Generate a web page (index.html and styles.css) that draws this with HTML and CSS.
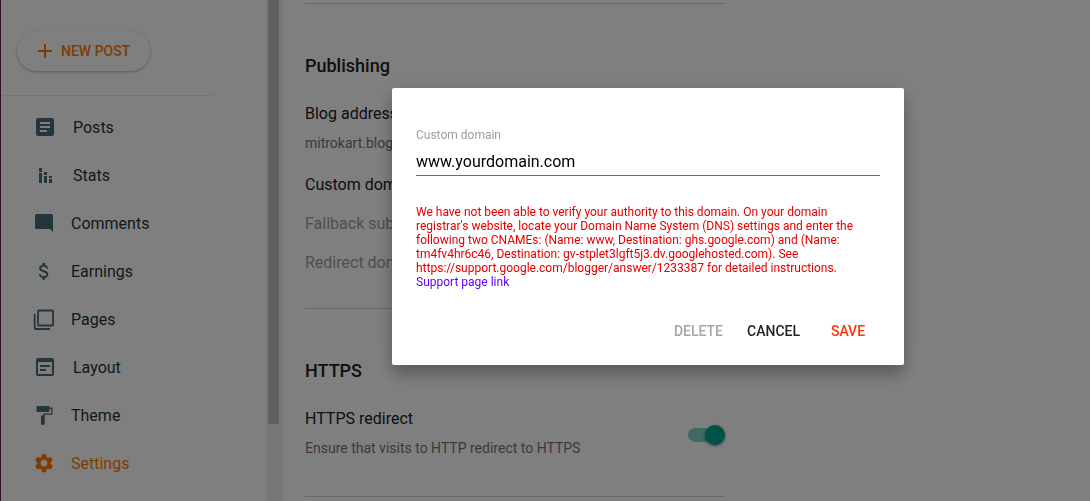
FILE: index.html
```html
<!DOCTYPE html>
<html lang="en">
<head>
  <meta charset="UTF-8" />
  <meta name="viewport" content="width=device-width, initial-scale=1.0"/>
  <title>Blog settings</title>
  <link rel="stylesheet" href="styles.css">
</head>
<body>

  <div class="app">
    <aside class="sidebar">
      <div class="sidebar-content">
        <button class="new-post">
          <svg width="14" height="14" viewBox="0 0 14 14"><path d="M6 0h2v6h6v2H8v6H6V8H0V6h6z"/></svg>
          NEW POST
        </button>
        <nav class="menu">
          <a href="#posts">
            <svg width="24" height="24" viewBox="0 0 24 24"><path fill-rule="evenodd" d="M5 3h14a2 2 0 0 1 2 2v14a2 2 0 0 1-2 2H5a2 2 0 0 1-2-2V5a2 2 0 0 1 2-2zM7 7v2h10V7zM7 11v2h10v-2zM7 15v2h7v-2z"/></svg>
            Posts
          </a>
          <a href="#stats">
            <svg width="24" height="24" viewBox="0 0 24 24"><path d="M6 5h3v4H6zM6 10h3v10H6zM11 9h3v3h-3zM11 13h3v7h-3zM16 13h3v2h-3zM16 16h3v4h-3z"/></svg>
            Stats
          </a>
          <a href="#comments">
            <svg width="22" height="24" viewBox="0 0 22 24"><path d="M3.500 3h15A1.500 1.500 0 0 1 20 4.500V21l-3-3H3.500A1.500 1.500 0 0 1 2 16.500v-12A1.500 1.500 0 0 1 3.500 3z"/></svg>
            Comments
          </a>
          <a href="#earnings">
            <svg width="22" height="24" viewBox="0 0 22 24"><path transform="translate(0 1.200) scale(.93)" d="M11.800 10.900c-2.270-.59-3-1.200-3-2.150 0-1.090 1.010-1.850 2.700-1.850 1.780 0 2.440.85 2.500 2.100h2.210c-.07-1.720-1.120-3.300-3.210-3.810V3h-3v2.160c-1.940.42-3.500 1.680-3.500 3.610 0 2.310 1.910 3.460 4.700 4.130 2.500.6 3 1.480 3 2.410 0 .69-.49 1.790-2.700 1.790-2.060 0-2.870-.92-2.980-2.100h-2.200c.12 2.190 1.760 3.420 3.680 3.830V21h3v-2.150c1.950-.37 3.500-1.500 3.500-3.550 0-2.840-2.430-3.810-4.700-4.400z"/></svg>
            Earnings
          </a>
          <a href="#pages">
            <svg class="line-icon" width="22" height="24" viewBox="0 0 22 24"><rect x="5" y="3.500" width="15" height="15" rx="1"/><path d="M1.700 7v13.700a1.300 1.300 0 0 0 1.300 1.300h14"/></svg>
            Pages
          </a>
          <a href="#layout">
            <svg width="24" height="24" viewBox="0 0 24 24"><path fill-rule="evenodd" d="M5 3h14a2 2 0 0 1 2 2v14a2 2 0 0 1-2 2H5a2 2 0 0 1-2-2V5a2 2 0 0 1 2-2zM5 7v12h14V7zM7 10h10v2H7zM7 14h6v2H7z"/></svg>
            Layout
          </a>
          <a href="#theme">
            <svg width="22" height="24" viewBox="0 0 22 24"><path d="M4.500 3h11a1 1 0 0 1 1 1v.5h3v7.300h-7.800v9.900H8v-9.200h2.200v-2h8V6h-1.700v2a1 1 0 0 1-1 1h-11a1 1 0 0 1-1-1V4a1 1 0 0 1 1-1z"/></svg>
            Theme
          </a>
          <a class="active" href="#settings">
            <svg width="22" height="24" viewBox="0 0 22 24"><path transform="translate(-.3 .9) scale(.94)" d="M19.140 12.940c.04-.3.06-.61.06-.94 0-.32-.02-.64-.07-.94l2.030-1.580c.18-.14.23-.41.12-.61l-1.920-3.320c-.12-.22-.37-.29-.59-.22l-2.390.96c-.5-.38-1.030-.7-1.620-.94l-.36-2.540c-.04-.24-.24-.41-.48-.41h-3.840c-.24 0-.43.17-.47.41l-.36 2.540c-.59.24-1.130.57-1.620.94l-2.390-.96c-.22-.08-.47 0-.59.22L2.740 8.870c-.12.21-.08.47.12.61l2.030 1.580c-.05.3-.09.63-.09.94s.02.64.07.94l-2.030 1.580c-.18.14-.23.41-.12.61l1.920 3.320c.12.22.37.29.59.22l2.390-.96c.5.38 1.030.7 1.620.94l.36 2.540c.05.24.24.41.48.41h3.840c.24 0 .44-.17.47-.41l.36-2.540c.59-.24 1.130-.56 1.620-.94l2.390.96c.22.08.47 0 .59-.22l1.920-3.320c.12-.22.07-.47-.12-.61l-2.010-1.580zM12 15.600c-1.980 0-3.600-1.620-3.600-3.600s1.620-3.600 3.600-3.600 3.600 1.620 3.600 3.600-1.620 3.600-3.600 3.600z"/></svg>
            Settings
          </a>
        </nav>
      </div>
      <div class="scrollbar"><div class="thumb"></div></div>
    </aside>

    <main class="settings">
      <section>
        <h2>Publishing</h2>
        <div class="setting">
          <h3>Blog address</h3>
          <p>mitrokart.blogspot.com</p>
        </div>
        <div class="setting">
          <h3>Custom domain</h3>
        </div>
        <div class="setting disabled">
          <h3>Fallback subdomain</h3>
        </div>
        <div class="setting disabled">
          <h3>Redirect domain</h3>
        </div>
      </section>
      <section>
        <h2>HTTPS</h2>
        <div class="setting with-switch">
          <label for="https-redirect">
            <span class="title">HTTPS redirect</span>
            <span class="description">Ensure that visits to HTTP redirect to HTTPS</span>
          </label>
          <input class="switch" id="https-redirect" type="checkbox" checked>
        </div>
      </section>
      <section></section>
    </main>
  </div>

  <div class="overlay">
    <div class="dialog" role="dialog" aria-modal="true">
      <label class="field-label" for="domain">Custom domain</label>
      <input class="field" id="domain" type="text" value="www.yourdomain.com">
      <div class="error">
        We have not been able to verify your authority to this domain. On your domain registrar's website, locate your Domain Name System (DNS) settings and enter the following two CNAMEs: (Name: www, Destination: ghs.google.com) and (Name: tm4fv4hr6c46, Destination: gv-stplet3lgft5j3.dv.googlehosted.com). See https://support.google.com/blogger/answer/1233387 for detailed instructions.
        <a href="https://support.google.com/blogger/answer/1233387">Support page link</a>
      </div>
      <div class="actions">
        <button disabled>DELETE</button>
        <button>CANCEL</button>
        <button class="save">SAVE</button>
      </div>
    </div>
  </div>

</body>
</html>
```
FILE: styles.css
```css
* {
  box-sizing: border-box;
}

body {
  font-family: Roboto, Arial, sans-serif;
  background-color: #fff;
  color: #202124;
  margin: 0;
}

button, input {
  font-family: inherit;
}

.app {
  display: flex;
  height: 100vh;
  overflow: hidden;
  border-left: 1px solid #5a2254;
}

.sidebar {
  display: flex;
  flex: none;
  width: 281px;
}

.sidebar-content {
  flex: 1;
  padding-top: 31px;
}

.new-post {
  display: flex;
  align-items: center;
  gap: 9px;
  height: 40px;
  margin-left: 16px;
  padding: 0 20px 0 21px;
  border: none;
  border-radius: 20px;
  background-color: #fff;
  box-shadow: 0 1px 3px rgba(0,0,0,0.3);
  color: #ff7800;
  font-size: 14px;
  font-weight: 500;
  cursor: pointer;
}

.menu {
  margin: 24px 54px 0 0;
  padding-top: 7px;
  border-top: 1px solid #e8e8e8;
}

.menu a {
  display: flex;
  align-items: center;
  gap: 16px;
  height: 48px;
  padding-left: 32px;
  color: #263238;
  font-size: 16px;
  text-decoration: none;
}

.menu a.active {
  color: #ff7800;
}

svg {
  fill: #4a6a7a;
}

.new-post svg, .active svg {
  fill: #ff7800;
}

.line-icon {
  fill: none;
  stroke: #4a6a7a;
  stroke-width: 1.8;
}

.scrollbar {
  width: 16px;
  padding: 0 2px;
  background-color: #f1f1f1;
  border-right: 1px solid #e4e4e4;
}

.thumb {
  height: 424px;
  background-color: #c1c1c1;
}

.settings {
  flex: 1;
  max-width: 443px;
  padding: 3px 0 0 23px;
}

section {
  padding: 50px 0 33px;
  border-top: 1px solid #d4d4d4;
}

h2 {
  margin: 0 0 24px;
  font-size: 18px;
  font-weight: 500;
  line-height: 24px;
}

h3, .title {
  display: block;
  margin: 0;
  font-size: 16px;
  font-weight: 400;
  line-height: 24px;
}

.setting p, .description {
  display: block;
  color: #757575;
  font-size: 14px;
  line-height: 20px;
}

.setting p {
  margin: 7px 0 20px;
}

.description {
  margin: 7px 0 5px;
}

.disabled {
  margin-top: 15px;
  color: #9e9e9e;
}

.with-switch {
  display: flex;
  align-items: center;
  justify-content: space-between;
}

.switch {
  appearance: none;
  position: relative;
  width: 37px;
  height: 14px;
  margin: 0;
  border-radius: 7px;
  background-color: #80d2c7;
}

.switch::after {
  content: "";
  position: absolute;
  top: -3px;
  right: 0;
  width: 20px;
  height: 20px;
  border-radius: 50%;
  background-color: #00a693;
  box-shadow: 0 1px 3px rgba(0,0,0,0.5);
}

.overlay {
  position: fixed;
  inset: 0;
  display: flex;
  align-items: flex-start;
  justify-content: center;
  padding: 88px 0 0 206px;
  background-color: rgba(0,0,0,0.5);
}

.dialog {
  width: 512px;
  padding: 39px 24px 16px;
  border-radius: 2px;
  background-color: #fff;
  box-shadow: 0 11px 15px rgba(0,0,0,0.2), 0 4px 20px rgba(0,0,0,0.14);
}

.field-label {
  display: block;
  color: #9e9e9e;
  font-size: 12px;
  line-height: 16px;
}

.field {
  display: block;
  width: 100%;
  height: 26px;
  margin-top: 7px;
  padding: 0 0 2px;
  border: none;
  border-bottom: 1px solid #ff3300;
  color: #000;
  font-size: 16px;
}

.error {
  margin: 29px 0 24px;
  color: #e60000;
  font-size: 12px;
  line-height: 14px;
}

.error a {
  display: block;
  color: #6200ff;
  text-decoration: none;
}

.actions {
  display: flex;
  justify-content: flex-end;
  gap: 8px;
}

.actions button {
  min-width: 64px;
  height: 36px;
  padding: 0 8px;
  border: none;
  background: none;
  color: #212121;
  font-size: 14px;
  font-weight: 500;
  cursor: pointer;
}

.actions button:disabled {
  color: #a6a6a6;
  cursor: default;
}

.actions .save {
  color: #ff3300;
}
```
